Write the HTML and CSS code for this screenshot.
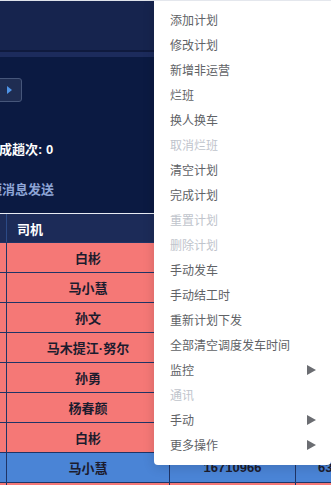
FILE: index.html
```html
<!DOCTYPE html>
<html lang="zh-CN">
  <head>
    <meta charset="UTF-8" />
    <meta name="viewport" content="width=device-width, initial-scale=1.0" />
    <title>调度</title>
    <link rel="stylesheet" href="styles.css">
  </head>
  <body>
    <div class="topbar"></div>
    <div class="divider"></div>
    <div class="main">
      <div class="toolbar">
        <button class="pager-btn"><span class="tri"></span></button>
      </div>
      <div class="stats">完成趟次: 0</div>
      <div class="msg">短消息发送</div>
    </div>

    <div class="grid">
      <div class="row head">
        <div class="cell"></div>
        <div class="cell name">司机</div>
        <div class="cell"></div>
        <div class="cell"></div>
      </div>
      <div class="row red"><div class="cell"></div><div class="cell">白彬</div><div class="cell"></div><div class="cell"></div></div>
      <div class="row red"><div class="cell"></div><div class="cell">马小慧</div><div class="cell"></div><div class="cell"></div></div>
      <div class="row red"><div class="cell"></div><div class="cell">孙文</div><div class="cell"></div><div class="cell"></div></div>
      <div class="row red"><div class="cell"></div><div class="cell">马木提江·努尔</div><div class="cell"></div><div class="cell"></div></div>
      <div class="row red"><div class="cell"></div><div class="cell">孙勇</div><div class="cell"></div><div class="cell"></div></div>
      <div class="row red"><div class="cell"></div><div class="cell">杨春颜</div><div class="cell"></div><div class="cell"></div></div>
      <div class="row red"><div class="cell"></div><div class="cell">白彬</div><div class="cell"></div><div class="cell"></div></div>
      <div class="row blue"><div class="cell"></div><div class="cell">马小慧</div><div class="cell">16710966</div><div class="cell left">6321</div></div>
      <div class="row red"><div class="cell"></div><div class="cell"></div><div class="cell"></div><div class="cell"></div></div>
    </div>

    <ul class="menu">
      <li>添加计划</li>
      <li>修改计划</li>
      <li>新增非运营</li>
      <li>烂班</li>
      <li>换人换车</li>
      <li class="off">取消烂班</li>
      <li>清空计划</li>
      <li>完成计划</li>
      <li class="off">重置计划</li>
      <li class="off">删除计划</li>
      <li>手动发车</li>
      <li>手动结工时</li>
      <li>重新计划下发</li>
      <li>全部清空调度发车时间</li>
      <li class="sub">监控<span class="arrow"></span></li>
      <li class="off">通讯</li>
      <li class="sub">手动<span class="arrow"></span></li>
      <li class="sub">更多操作<span class="arrow"></span></li>
    </ul>
  </body>
</html>
```

FILE: styles.css
```css
body {
  margin: 0;
  width: 331px;
  height: 485px;
  overflow: hidden;
  position: relative;
  background: #0b1a42;
  font-family: "Liberation Sans", "Noto Sans CJK SC", sans-serif;
}

.topbar {
  height: 49px;
  border-top: 1px solid #dfe3ea;
  background: #16244e;
}

/* thin dark line then a lighter band under the top bar */
.divider {
  height: 5px;
  border-top: 2px solid #0f1a3e;
  background: #1c2b5c;
}

.toolbar {
  padding-top: 21px;
  height: 24px;
}

.pager-btn {
  display: flex;
  align-items: center;
  justify-content: flex-end;
  margin-left: -10px;
  width: 32px;
  height: 24px;
  padding: 0 9px 0 0;
  background: #1f2d52;
  border: 1px solid #46567a;
  border-radius: 3px;
  box-sizing: border-box;
}

.tri {
  width: 0;
  height: 0;
  border-left: 5px solid #4f94e6;
  border-top: 4px solid transparent;
  border-bottom: 4px solid transparent;
}

.stats {
  margin: 38px 0 0 -14px;
  height: 20px;
  line-height: 20px;
  font-size: 13px;
  font-weight: bold;
  color: #ffffff;
  white-space: nowrap;
}

.msg {
  margin: 20px 0 0 -11px;
  height: 20px;
  line-height: 20px;
  font-size: 13px;
  font-weight: bold;
  color: #8ea5d6;
  white-space: nowrap;
}

.grid {
  margin: 13px 0 0 -50px;
  border-top: 1px solid #e8ecf4;
  width: 460px;
}

.row {
  display: grid;
  grid-template-columns: 57px 163px 126px 114px;
  height: 30px;
  box-sizing: border-box;
  border-bottom: 1px solid #1f3466;
}

.cell {
  border-right: 1px solid #1f3466;
  display: flex;
  align-items: center;
  justify-content: center;
  font-size: 13px;
  font-weight: bold;
  color: #1c1c2e;
  white-space: nowrap;
  overflow: hidden;
}

.head {
  height: 29px;
  background: #1c2b58;
}

.head .cell {
  border-right-color: #2c4a86;
}

.head .name {
  justify-content: flex-start;
  padding-left: 10px;
  color: #ffffff;
}

.red {
  background: #f57876;
}

.blue {
  background: #4a84d6;
}

.cell.left {
  justify-content: flex-start;
  padding-left: 22px;
}

.menu {
  position: absolute;
  top: 0;
  left: 154px;
  width: 177px;
  margin: 0;
  padding: 6px 0 8px;
  list-style: none;
  background: #ffffff;
  border-top: 1px solid #e4e7ed;
  border-radius: 0 0 4px 4px;
  box-shadow: 0 2px 12px rgba(0, 0, 0, 0.15);
}

.menu li {
  display: flex;
  align-items: center;
  justify-content: space-between;
  height: 25px;
  padding: 0 15px 0 16px;
  font-size: 12px;
  color: #606266;
}

.menu li.off {
  color: #c0c4cc;
}

.arrow {
  width: 0;
  height: 0;
  border-left: 9px solid #6b6d72;
  border-top: 5px solid transparent;
  border-bottom: 5px solid transparent;
}
```
